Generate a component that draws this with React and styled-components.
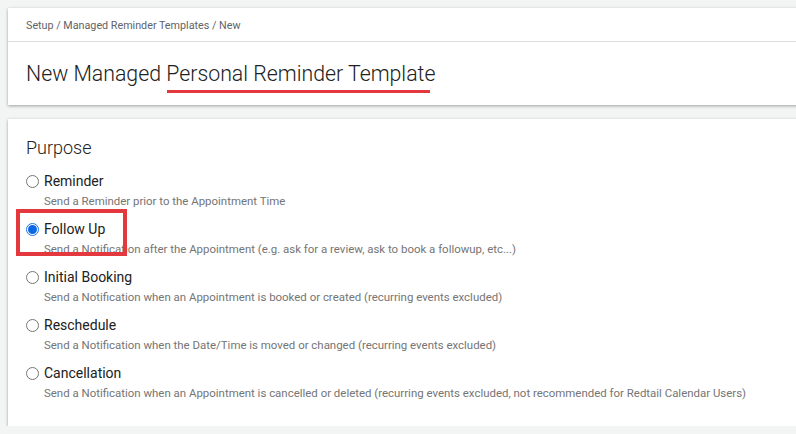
import styled, { createGlobalStyle } from "styled-components";

const GlobalStyle = createGlobalStyle`
	html, body {
		margin: 0;
		padding: 0;
		background: #f3f4f4;
		font-family: Roboto, "Liberation Sans", sans-serif;
		overflow: hidden;
	}
`;

const Page = styled.div`
	padding: 8px 0 0 8px;
	width: 810px;
	display: flex;
	flex-direction: column;
	gap: 14px;
`;

const Card = styled.div`
	background: #fff;
	box-shadow: 0 1px 3px rgba(0, 0, 0, 0.35);
`;

const Breadcrumb = styled.div`
	height: 34px;
	box-sizing: border-box;
	padding: 11px 18px 0;
	font-size: 10.75px;
	color: #5f6368;
	border-bottom: 1px solid #dedede;
`;

const Title = styled.h1`
	margin: 0;
	padding: 20px 18px 19px;
	font-size: 21.3px;
	font-weight: 300;
	color: #212121;
	line-height: 24px;
`;

const Marked = styled.span`
	position: relative;

	&::after {
		content: "";
		position: absolute;
		left: 1px;
		right: 5px;
		bottom: -7px;
		height: 3px;
		background: #e3383e;
	}
`;

const Body = styled.div`
	padding: 18px 18px 22px;
	height: 307px;
	box-sizing: border-box;
`;

const Heading = styled.h2`
	margin: 0 0 12px;
	font-size: 18px;
	font-weight: 300;
	color: #212121;
	line-height: 22px;
`;

const Option = styled.label`
	position: relative;
	display: grid;
	grid-template-columns: 18px 1fr;
	align-content: start;
	height: 48px;
`;

const Radio = styled.span`
	width: 13px;
	height: 13px;
	box-sizing: border-box;
	margin-top: 4px;
	border-radius: 50%;
	border: 1px solid ${(p) => (p.checked ? "#1a73e8" : "#767676")};
	background: #fff;
	display: flex;
	align-items: center;
	justify-content: center;

	&::after {
		content: "";
		display: ${(p) => (p.checked ? "block" : "none")};
		width: 9px;
		height: 9px;
		border-radius: 50%;
		background: #0b67e5;
	}
`;

const Label = styled.div`
	font-size: 14px;
	line-height: 20px;
	color: #212121;
`;

const Desc = styled.div`
	grid-column: 2;
	margin-top: 2px;
	font-size: 11.45px;
	line-height: 16px;
	color: #757575;
`;

const Highlight = styled.span`
	position: absolute;
	left: -10px;
	top: -10px;
	width: 111px;
	height: 47px;
	box-sizing: border-box;
	border: 4px solid #e3383e;
	pointer-events: none;
`;

const options = [
	{ label: "Reminder", desc: "Send a Reminder prior to the Appointment Time" },
	{
		label: "Follow Up",
		desc: "Send a Notification after the Appointment (e.g. ask for a review, ask to book a followup, etc...)",
		checked: true,
	},
	{
		label: "Initial Booking",
		desc: "Send a Notification when an Appointment is booked or created (recurring events excluded)",
	},
	{
		label: "Reschedule",
		desc: "Send a Notification when the Date/Time is moved or changed (recurring events excluded)",
	},
	{
		label: "Cancellation",
		desc: "Send a Notification when an Appointment is cancelled or deleted (recurring events excluded, not recommended for Redtail Calendar Users)",
	},
];

const App = () => {
	return (
		<>
			<GlobalStyle />
			<Page>
				<Card>
					<Breadcrumb>Setup / Managed Reminder Templates / New</Breadcrumb>
					<Title>
						New Managed <Marked>Personal Reminder Template</Marked>
					</Title>
				</Card>
				<Card>
					<Body>
						<Heading>Purpose</Heading>
						{options.map((o) => (
							<Option key={o.label}>
								<Radio checked={o.checked} />
								<Label>{o.label}</Label>
								<Desc>{o.desc}</Desc>
								{o.checked && <Highlight />}
							</Option>
						))}
					</Body>
				</Card>
			</Page>
		</>
	);
};

export default App;
